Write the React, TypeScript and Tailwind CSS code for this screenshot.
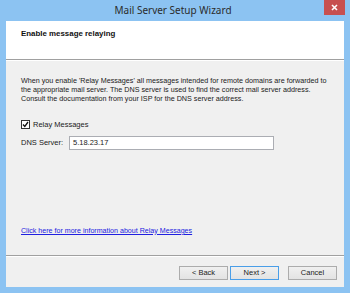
import React from "react";

const body = { fontFamily: '"Liberation Sans", Arial, sans-serif' };

function WizButton({ label, primary }: { label: string; primary?: boolean }) {
  return (
    <button
      className={`w-[49px] h-[14px] flex items-center justify-center text-[7.5px] leading-none text-[#222] bg-gradient-to-b from-[#f0f0f0] to-[#e3e3e3] border ${primary ? "border-[#4a9ee8]" : "border-[#acacac]"}`}
      style={body}
    >
      {label}
    </button>
  );
}

export default function App() {
  return (
    <div className="w-[350px] h-[293px] bg-[#8cc3f2] flex flex-col overflow-hidden">
      {/* title bar */}
      <div className="relative h-[21px] flex items-center justify-center">
        <span className="text-[10px] text-[#2b2b2b] pr-[4px]" style={{ fontFamily: '"Noto Sans", "Open Sans", sans-serif' }}>
          Mail Server Setup Wizard
        </span>
        <div className="absolute right-[5px] top-0 w-[21px] h-[15px] bg-[#c75050] flex items-center justify-center">
          <svg width="7" height="7" viewBox="0 0 7 7">
            <path d="M1 1L6 6M6 1L1 6" stroke="#fff" strokeWidth="1.6" />
          </svg>
        </div>
      </div>

      <div className="flex-1 mx-[6px] mb-[6px] flex flex-col bg-[#f0f0f0]">
        {/* header */}
        <div className="h-[39px] bg-white border-b border-[#a0a0a0] px-[15px] pt-[7px]">
          <p className="text-[7.9px] font-bold text-[#111]" style={body}>Enable message relaying</p>
        </div>
        <div className="h-px bg-white" />

        {/* body */}
        <div className="flex-1 flex flex-col px-[15px] pt-[15px] text-[7.5px] leading-[9.2px] text-[#1a1a1a]" style={body}>
          <p className="whitespace-nowrap text-[7.2px]">
            When you enable 'Relay Messages' all messages intended for remote domains are forwarded to
            <br />
            the appropriate mail server. The DNS server is used to find the correct mail server address.
            <br />
            Consult the documentation from your ISP for the DNS server address.
          </p>

          <label className="flex items-center gap-[3px] mt-[16px]">
            <span className="w-[9px] h-[9px] border border-[#333] bg-white flex items-center justify-center">
              <svg width="7" height="7" viewBox="0 0 7 7">
                <path d="M1 3.5L2.8 5.5L6 1" stroke="#111" strokeWidth="1.3" fill="none" />
              </svg>
            </span>
            <span>Relay Messages</span>
          </label>

          <div className="flex items-center mt-[7px]">
            <span className="w-[48px]">DNS Server:</span>
            <div className="w-[205px] h-[14px] bg-white border border-[#abadb3] flex items-center px-[3px]">
              5.18.23.17
            </div>
          </div>

          <div className="flex-1" />

          <a className="text-[#2020e0] underline mb-[19px] text-[7.1px]" href="#">
            Click here for more information about Relay Messages
          </a>
        </div>

        {/* footer */}
        <div className="border-t border-[#a0a0a0]">
          <div className="border-t border-white h-[31px] flex items-center justify-end pr-[7px] pt-[1px]">
            <div className="flex gap-[2px]">
              <WizButton label="< Back" />
              <WizButton label="Next >" primary />
            </div>
            <div className="ml-[9px]">
              <WizButton label="Cancel" />
            </div>
          </div>
        </div>
      </div>
    </div>
  );
}
